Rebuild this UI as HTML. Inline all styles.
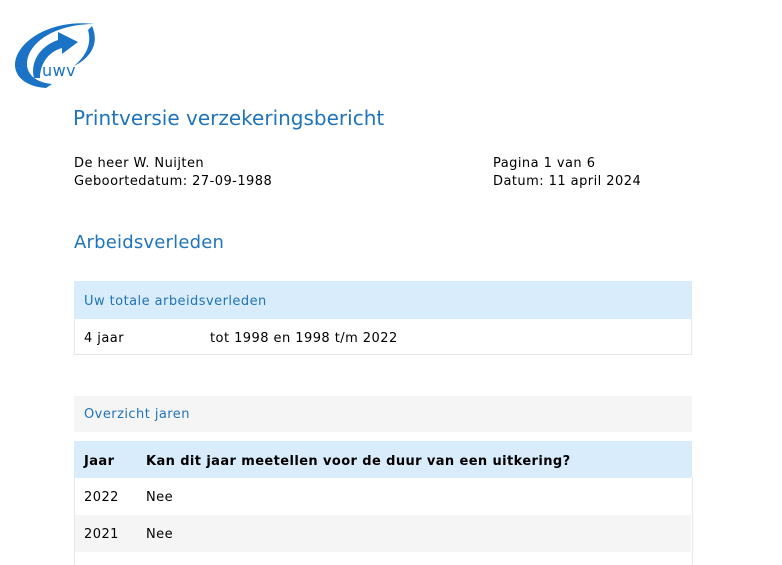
<!DOCTYPE html>
<html><head><meta charset="utf-8"><style>
body{margin:0;width:782px;height:565px;overflow:hidden;background:#fff;font-family:"DejaVu Sans","Liberation Sans",sans-serif;font-size:13px;letter-spacing:0.45px;color:#000;position:relative}
.a{position:absolute;white-space:nowrap}
.blue{color:#1f74bb}
</style></head><body>
<svg class="a" style="left:12px;top:18px" width="86" height="72" viewBox="0 0 86 72">
<path d="M34 70 C6 68 -4 50 8 32 C20 14 50 2 82 6 C54 6 28 16 18 34 C10 50 18 64 40 66 Z" fill="#1a73c6"/>
<path d="M22 60 C18 44 28 28 46 22 L46 14 L66 24 L50 36 L50 30 C36 34 28 46 28 60 Z" fill="#1a73c6"/>
<path d="M80 8 C88 26 78 40 62 48 C74 38 80 26 76 12 Z" fill="#1a73c6"/>
<text x="30" y="58" font-family="DejaVu Sans,sans-serif" font-size="16" fill="#1a73c6">uwv</text>
</svg>
<div class="a blue" style="left:73px;top:106px;font-size:20px;letter-spacing:0">Printversie verzekeringsbericht</div>
<div class="a" style="left:74px;top:155px;line-height:18px">De heer W. Nuijten<br>Geboortedatum: 27-09-1988</div>
<div class="a" style="left:493px;top:155px;line-height:18px">Pagina 1 van 6<br>Datum: 11 april 2024</div>
<div class="a blue" style="left:74px;top:232px;font-size:18px;letter-spacing:0.2px">Arbeidsverleden</div>
<div class="a" style="left:74px;top:281px;width:618px;height:38px;background:#d9ecfb"></div>
<div class="a blue" style="left:84px;top:294px">Uw totale arbeidsverleden</div>
<div class="a" style="left:74px;top:319px;width:616px;height:35px;border:1px solid #e3e8ec;border-top:none"></div>
<div class="a" style="left:84px;top:331px">4 jaar</div>
<div class="a" style="left:210px;top:331px">tot 1998 en 1998 t/m 2022</div>
<div class="a" style="left:74px;top:396px;width:618px;height:36px;background:#f5f5f5"></div>
<div class="a blue" style="left:84px;top:407px">Overzicht jaren</div>
<div class="a" style="left:74px;top:441px;width:618px;height:37px;background:#d9ecfb"></div>
<div class="a" style="left:84px;top:454px;font-weight:bold;letter-spacing:0.4px">Jaar</div>
<div class="a" style="left:146px;top:454px;font-weight:bold;letter-spacing:0.4px">Kan dit jaar meetellen voor de duur van een uitkering?</div>
<div class="a" style="left:74px;top:478px;width:617px;height:87px;border-left:1px solid #e3e8ec;border-right:1px solid #e3e8ec"></div>
<div class="a" style="left:75px;top:515px;width:616px;height:37px;background:#f5f5f5"></div>
<div class="a" style="left:84px;top:490px">2022</div><div class="a" style="left:146px;top:490px">Nee</div>
<div class="a" style="left:84px;top:527px">2021</div><div class="a" style="left:146px;top:527px">Nee</div>
</body></html>
